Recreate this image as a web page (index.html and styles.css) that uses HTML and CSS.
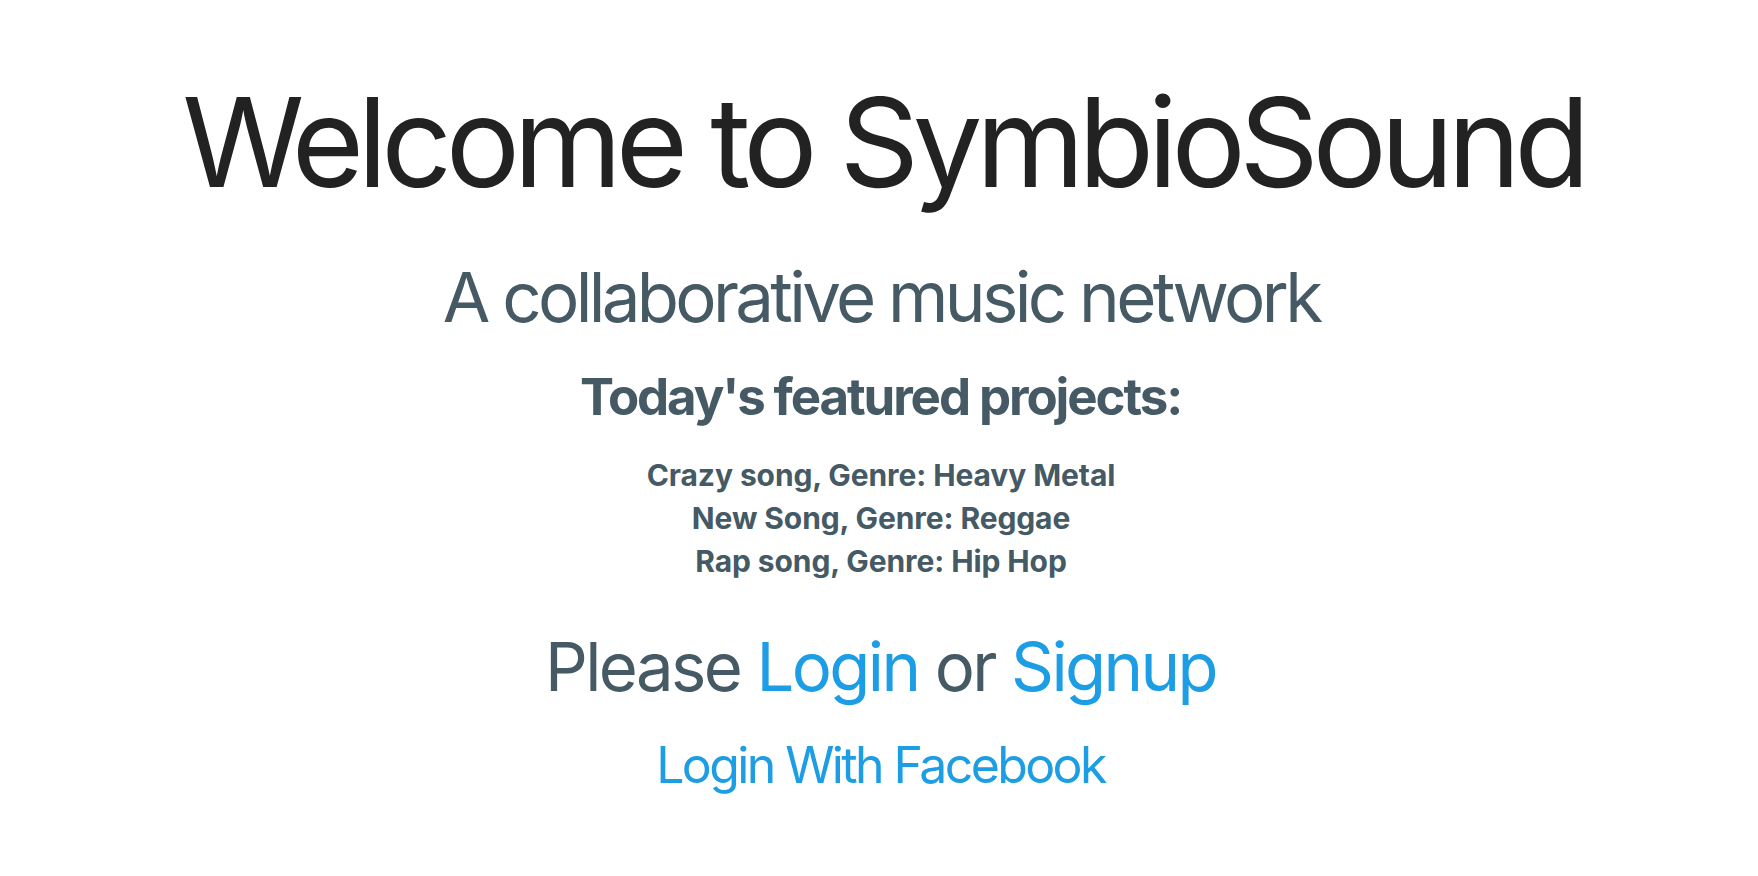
FILE: index.html
```html
<!DOCTYPE html>
<html lang="en">
<head>
<meta charset="utf-8">
<title>SymbioSound</title>
<link rel="stylesheet" href="styles.css">
</head>
<body>
<main class="home">
  <h1 class="title">Welcome to SymbioSound</h1>
  <h2 class="subtitle">A collaborative music network</h2>
  <h3 class="featured-heading">Today's featured projects:</h3>
  <ul class="featured-list">
    <li>Crazy song, Genre: Heavy Metal</li>
    <li>New Song, Genre: Reggae</li>
    <li>Rap song, Genre: Hip Hop</li>
  </ul>
  <p class="auth">Please <a href="#" class="link">Login</a> or <a href="#" class="link">Signup</a></p>
  <p class="facebook"><a href="#" class="link">Login With Facebook</a></p>
</main>
</body>
</html>
```

FILE: styles.css
```css
html, body {
  margin: 0;
  padding: 0;
  background: #ffffff;
}

body {
  font-family: Inter, "Noto Sans", "Liberation Sans", sans-serif;
  color: #455a64;
}

.home {
  display: flex;
  flex-direction: column;
  align-items: center;
  text-align: center;
  padding-top: 68px;
}

.title,
.subtitle,
.featured-heading,
.featured-list,
.auth,
.facebook {
  margin: 0;
  line-height: 1.2;
}

.title {
  font-size: 124px;
  font-weight: 400;
  color: #222222;
  letter-spacing: -6.4px;
  padding-left: 8px;
}

.subtitle {
  margin-top: 39px;
  font-size: 69px;
  font-weight: 400;
  letter-spacing: -3.7px;
  padding-left: 4px;
}

.featured-heading {
  margin-top: 27px;
  font-size: 51px;
  font-weight: 700;
  letter-spacing: -2.1px;
  padding-left: 3px;
}

.featured-list {
  margin-top: 27px;
  padding: 0 0 0 4px;
  list-style: none;
  font-size: 30px;
  font-weight: 700;
  line-height: 43px;
  letter-spacing: -0.1px;
}

.auth {
  margin-top: 44px;
  font-size: 67px;
  font-weight: 400;
  letter-spacing: -2.6px;
  padding-left: 3px;
}

.facebook {
  margin-top: 28px;
  font-size: 50px;
  font-weight: 400;
  letter-spacing: -2.6px;
  padding-left: 3px;
}

.link {
  color: #1d9de3;
  text-decoration: none;
}
```
